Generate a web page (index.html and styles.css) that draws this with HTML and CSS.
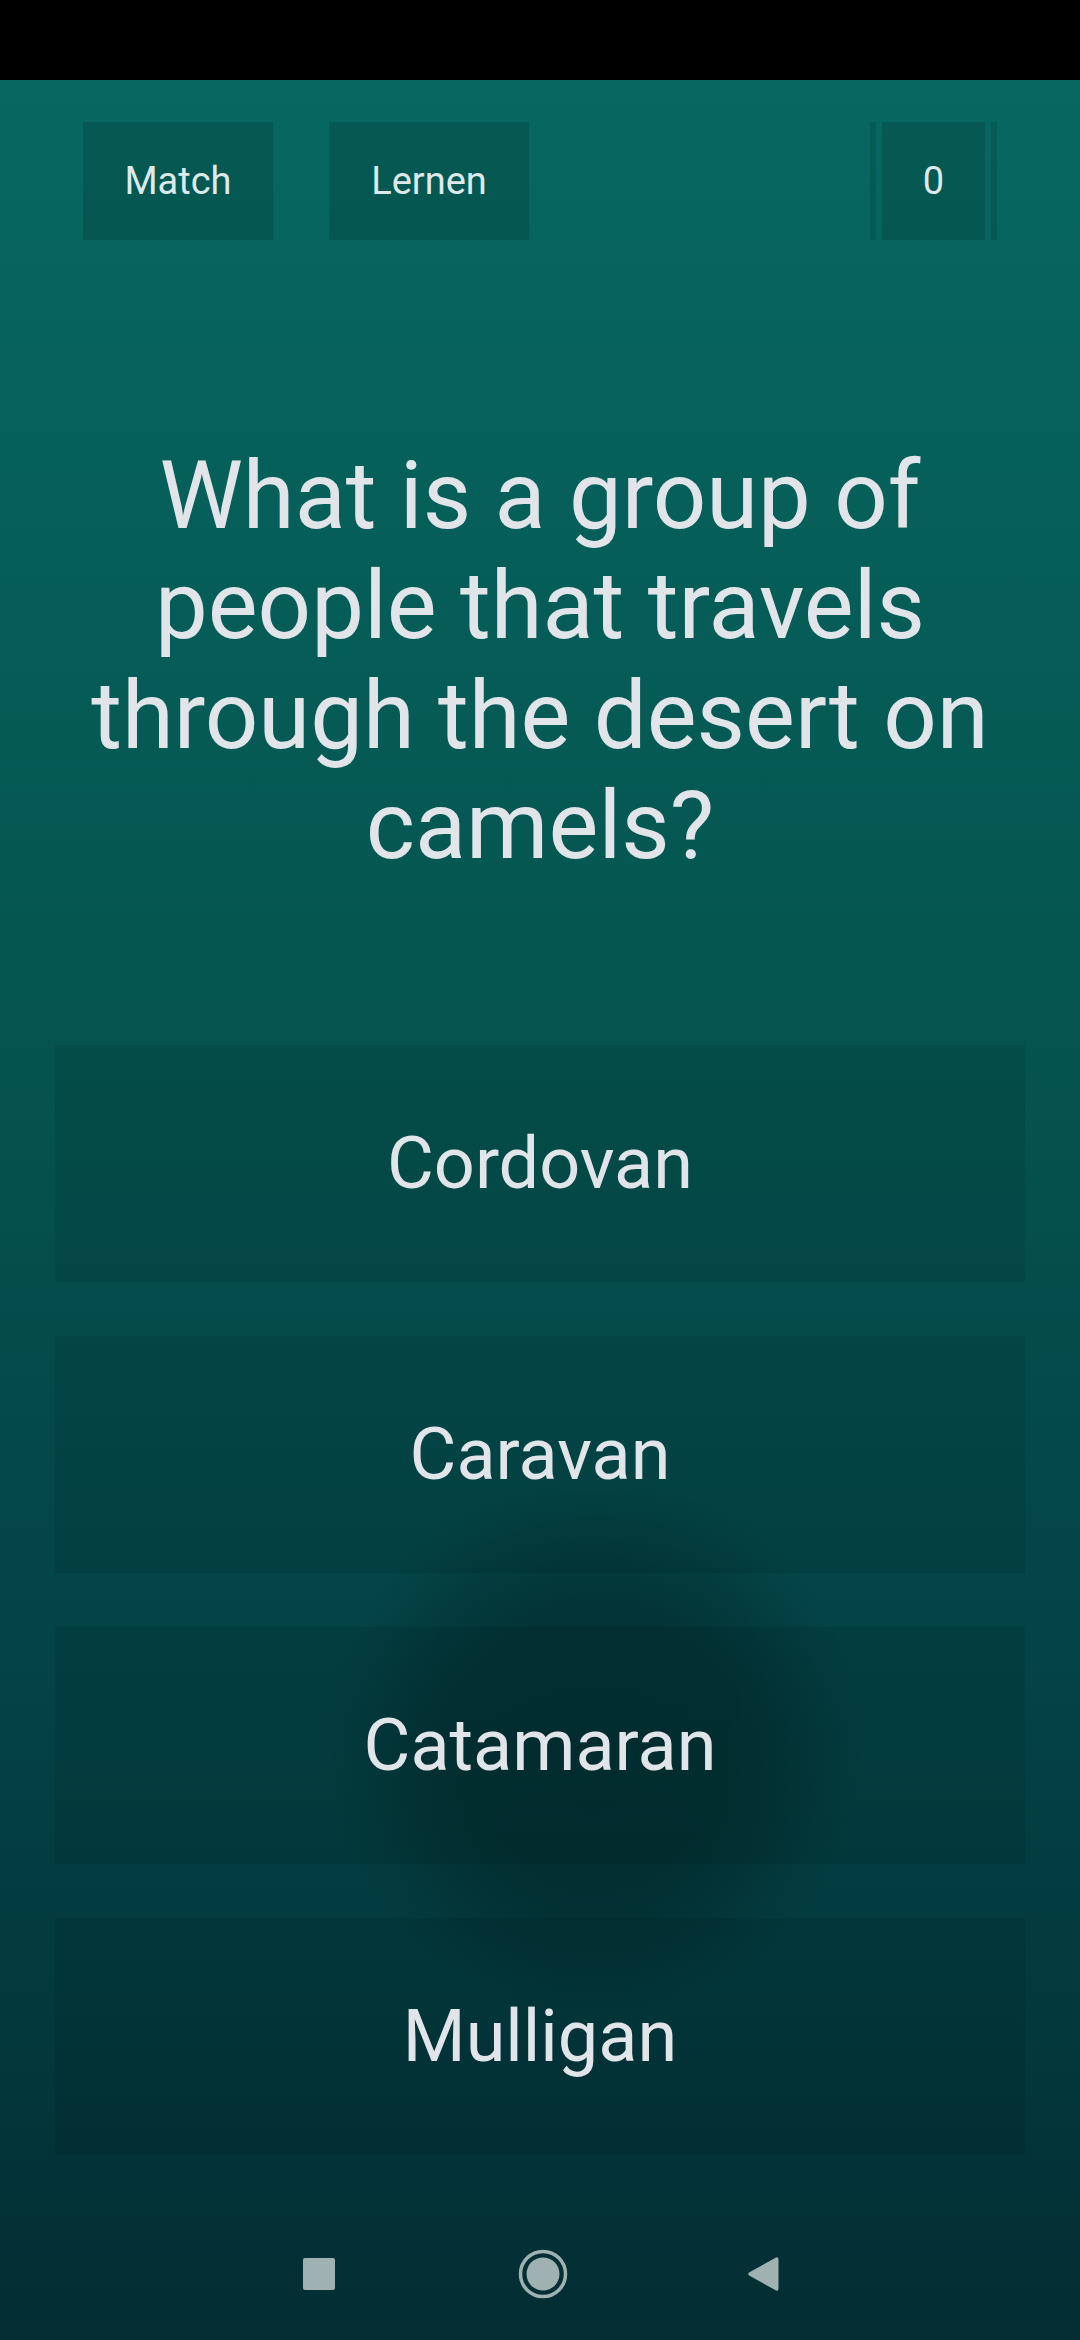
FILE: index.html
```html
<!DOCTYPE html>
<html lang="de">
<head>
<meta charset="utf-8">
<title>Quiz</title>
<link rel="stylesheet" href="styles.css">
</head>
<body>
<div class="statusbar"></div>
<main class="screen">
  <header class="topbar">
    <div class="chip chip-match">Match</div>
    <div class="chip chip-learn">Lernen</div>
    <div class="score"><div class="score-inner">0</div></div>
  </header>
  <h1 class="question">What is a group of people that travels through the desert on camels?</h1>
  <section class="answers">
    <div class="answer">Cordovan</div>
    <div class="answer">Caravan</div>
    <div class="answer answer-pressed">Catamaran</div>
    <div class="answer">Mulligan</div>
  </section>
  <nav class="navbar">
    <span class="nav-square"></span>
    <svg class="nav-home" width="50" height="50" viewBox="0 0 50 50">
      <circle cx="25" cy="25" r="22.5" fill="none" stroke="#a0b1b2" stroke-width="3.5"/>
      <circle cx="25" cy="25" r="16.5" fill="#a0b1b2"/>
    </svg>
    <svg class="nav-back" width="32" height="38" viewBox="0 0 32 38">
      <path d="M29 2.5 Q31.5 1.5 31.5 4.5 V33.5 Q31.5 36.5 29 35.5 L2 20.5 Q0.5 19 2 17.5 Z" fill="#a0b1b2"/>
    </svg>
  </nav>
</main>
</body>
</html>
```

FILE: styles.css
```css
* {
  box-sizing: border-box;
}

html, body {
  margin: 0;
  padding: 0;
}

body {
  width: 1080px;
  height: 2340px;
  overflow: hidden;
  font-family: Roboto, "Noto Sans", "Liberation Sans", sans-serif;
  background: #000;
}

.statusbar {
  height: 80px;
  background: #000;
}

.screen {
  height: 2260px;
  display: flex;
  flex-direction: column;
  background: linear-gradient(180deg, #076861 0%, #05544f 42%, #044447 68%, #033a3e 84%, #032d33 100%);
  color: #e1e6ea;
}

.topbar {
  display: flex;
  align-items: stretch;
  height: 160px;
  padding: 42px 83px 0 83px;
}

.chip {
  height: 118px;
  display: flex;
  align-items: center;
  justify-content: center;
  background: rgba(0, 0, 0, 0.13);
  font-size: 38px;
  color: #dde9ea;
}

.chip-match {
  width: 190px;
}

.chip-learn {
  width: 200px;
  margin-left: 56px;
}

.score {
  margin-left: auto;
  width: 127px;
  height: 118px;
  padding: 0 6px;
  border-left: 6px solid rgba(0, 0, 0, 0.11);
  border-right: 6px solid rgba(0, 0, 0, 0.11);
}

.score-inner {
  height: 100%;
  display: flex;
  align-items: center;
  justify-content: center;
  background: rgba(0, 0, 0, 0.13);
  font-size: 38px;
  color: #dde9ea;
}

.question {
  margin: 201px 0 0 0;
  padding: 0 50px;
  font-size: 94px;
  line-height: 110px;
  font-weight: 400;
  text-align: center;
  color: #e1e5ea;
}

.answers {
  margin-top: 164px;
  padding: 0 55px;
  display: flex;
  flex-direction: column;
  gap: 54px;
}

.answer {
  position: relative;
  height: 237px;
  display: flex;
  align-items: center;
  justify-content: center;
  background: rgba(0, 0, 0, 0.08);
  font-size: 72px;
  color: #e1e5ea;
}

.answer-pressed {
  isolation: isolate;
}

.answer-pressed::before {
  content: "";
  position: absolute;
  left: calc(50% + 55px);
  top: 50%;
  width: 540px;
  height: 540px;
  transform: translate(-50%, -50%);
  background: radial-gradient(circle closest-side, rgba(0, 10, 12, 0.3) 0%, rgba(0, 10, 12, 0.28) 50%, rgba(0, 10, 12, 0.18) 70%, rgba(0, 10, 12, 0.06) 88%, rgba(0, 10, 12, 0) 100%);
  pointer-events: none;
  z-index: -1;
}

.navbar {
  margin-top: auto;
  height: 132px;
  display: flex;
  align-items: center;
  justify-content: center;
  gap: 183px;
}

.nav-square {
  display: block;
  width: 32px;
  height: 32px;
  border-radius: 2px;
  background: #a0b1b2;
  margin-left: 2px;
}

.nav-home {
  display: block;
}

.nav-back {
  display: block;
  margin-left: -4px;
}
```
